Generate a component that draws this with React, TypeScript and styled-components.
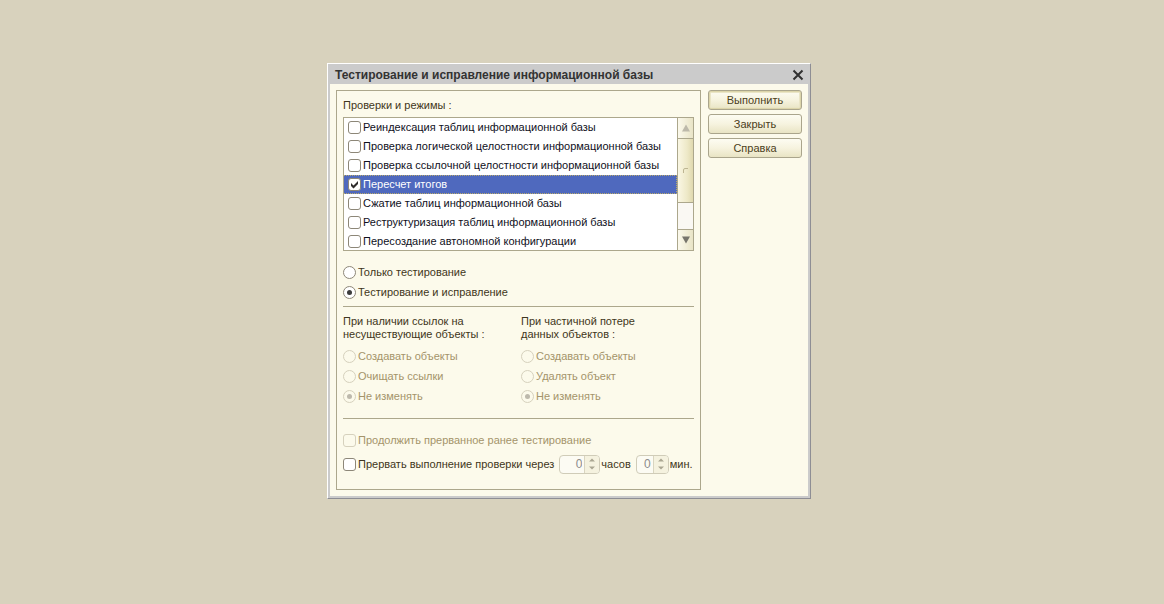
import React, { useState } from 'react';
import styled, { createGlobalStyle, css } from 'styled-components';

const colors = {
  desktop: '#d8d2bd',
  surface: '#fcfaeb',
  frame: '#cbcbcb',
  frameDark: '#8e8e94',
  line: '#aca78c',
  text: '#3f3620',
  muted: '#a4946a',
  accent: '#4f69be',
};

const GlobalStyle = createGlobalStyle`
  *, *::before, *::after {
    box-sizing: border-box;
  }

  body {
    margin: 0;
    background: ${colors.desktop};
    color: ${colors.text};
    font-family: 'Liberation Sans', Arial, sans-serif;
    font-size: 11px;
    line-height: 13px;
  }

  button, input {
    font: inherit;
    color: inherit;
  }
`;

const Desktop = styled.main`
  position: relative;
  min-height: 100vh;
`;

const Dialog = styled.section`
  position: absolute;
  top: 63px;
  left: 327px;
  width: 484px;
  border: 1px solid ${colors.frameDark};
  border-top-color: #fff;
  border-left-color: #fff;
  background: ${colors.frame};
  padding: 0 2px 2px 2px;
`;

const TitleBar = styled.header`
  display: flex;
  align-items: center;
  justify-content: space-between;
  height: 20px;
  padding: 1px 4px 0 5px;
`;

const Title = styled.h1`
  margin: 0;
  font-size: 12px;
  font-weight: 700;
  line-height: 20px;
  color: #333;
  white-space: nowrap;
`;

const CloseButton = styled.button`
  display: flex;
  padding: 0;
  border: 0;
  background: none;
  color: #303030;
`;

const Body = styled.div`
  display: flex;
  align-items: stretch;
  gap: 7px;
  padding: 6px;
  background: ${colors.surface};
`;

const Panel = styled.form`
  flex: 1;
  min-width: 0;
  border: 1px solid ${colors.line};
  padding: 8px 6px 15px;
`;

const Caption = styled.h2`
  margin: 0 0 5px;
  font-size: 11px;
  font-weight: 400;
  line-height: 13px;
`;

const ListBox = styled.div`
  display: flex;
  height: 134px;
  border: 1px solid ${colors.line};
  background: #fff;
`;

const Items = styled.ul`
  flex: 1;
  margin: 0;
  padding: 0;
  overflow: hidden;
  list-style: none;
`;

const Item = styled.li<{ $selected: boolean }>`
  padding-left: 4px;
  border: 1px dotted transparent;
  border-width: 1px 1px 1px 0;
  color: #10101c;

  ${({ $selected }) => $selected && css`
    border-color: #b9a96a;
    background: ${colors.accent};
    color: #fff;
  `}
`;

const ScrollBar = styled.div`
  display: flex;
  flex-direction: column;
  width: 16px;
  border-left: 1px solid ${colors.line};
  background: #faf8f3;
`;

const ScrollButton = styled.button`
  display: flex;
  align-items: center;
  justify-content: center;
  height: 20px;
  padding: 0;
  border: 0;
  background: linear-gradient(to right, #fbf9ec, #e9e4c6);
`;

const ScrollThumb = styled.div`
  display: flex;
  align-items: center;
  justify-content: center;
  height: 65px;
  border: 1px solid ${colors.line};
  border-width: 1px 0;
  background: linear-gradient(to right, #faf7e4, #eee9c8 60%, #e0d9ae);
`;

const ScrollTrack = styled.div`
  flex: 1;
  border-bottom: 1px solid ${colors.line};
`;

const Option = styled.label<{ $height: number; $disabled?: boolean }>`
  display: flex;
  align-items: center;
  gap: 2px;
  height: ${({ $height }) => $height}px;
  color: ${({ $disabled }) => ($disabled ? colors.muted : 'inherit')};
  white-space: nowrap;
`;

const Mark = styled.input`
  appearance: none;
  display: grid;
  place-content: center;
  flex: none;
  width: 13px;
  height: 13px;
  margin: 0;
  border: 1px solid #8d8778;
  background: #fff;

  &:disabled {
    border-color: #d6d1bd;
    background: ${colors.surface};
  }
`;

const CheckMark = styled(Mark).attrs({ type: 'checkbox' })`
  border-radius: 3px;
`;

const RadioMark = styled(Mark).attrs({ type: 'radio' })`
  border-radius: 50%;

  &:checked::before {
    content: '';
    width: 5px;
    height: 5px;
    border-radius: 50%;
    background: #3c3c3c;
  }

  &:checked:disabled::before {
    background: #bdb9ac;
  }
`;

const CheckHolder = styled.span`
  position: relative;
  display: flex;

  svg {
    position: absolute;
    inset: 0;
    pointer-events: none;
  }
`;

const Modes = styled.div`
  padding: 11px 0 4px;
`;

const Divider = styled.hr`
  height: 1px;
  margin: 0;
  border: 0;
  background: ${colors.line};
`;

const Columns = styled.div`
  display: grid;
  grid-template-columns: 178px 1fr;
  padding: 8px 0 12px;
`;

const Group = styled.fieldset`
  min-width: 0;
  margin: 0;
  padding: 0;
  border: 0;
`;

const Legend = styled.legend`
  margin-bottom: 5px;
  padding: 0;
  white-space: pre-line;
`;

const Footer = styled.div`
  display: grid;
  gap: 4px;
  padding-top: 11px;
`;

const TimeRow = styled.div`
  display: flex;
  align-items: center;
  gap: 5px;
`;

const Field = styled.label`
  display: flex;
  align-items: center;
  gap: 1px;
  white-space: nowrap;
`;

const Stepper = styled.span<{ $width: number }>`
  display: flex;
  width: ${({ $width }) => $width}px;
  height: 19px;
  border: 1px solid #d0ccb8;
  border-radius: 4px;
  background: #fcfbf3;
  overflow: hidden;
`;

const StepperInput = styled.input`
  flex: 1;
  min-width: 0;
  padding: 0 2px 0 0;
  border: 0;
  background: none;
  color: #8c8c8c;
  font-size: 12px;
  text-align: right;
`;

const StepperArrows = styled.span`
  display: flex;
  align-items: center;
  justify-content: center;
  width: 15px;
  border-left: 1px solid #d9d5c0;
  background: #f5f2df;
`;

const Actions = styled.div`
  display: flex;
  flex-direction: column;
  gap: 4px;
  width: 94px;
`;

const ActionButton = styled.button<{ $primary?: boolean }>`
  height: 20px;
  padding: 0;
  border: 1px solid #aaa58c;
  border-radius: 3px;
  background: linear-gradient(#fdfcf2, #f6f3df 50%, #e9e4c4);
  color: #4b4020;
  line-height: 18px;

  ${({ $primary }) => $primary && css`
    box-shadow: inset 0 0 0 1px #dcd5aa, inset 0 0 0 2px #eae5c6;
  `}
`;

const checks = [
  'Реиндексация таблиц информационной базы',
  'Проверка логической целостности информационной базы',
  'Проверка ссылочной целостности информационной базы',
  'Пересчет итогов',
  'Сжатие таблиц информационной базы',
  'Реструктуризация таблиц информационной базы',
  'Пересоздание автономной конфигурации',
];

const modes = ['Только тестирование', 'Тестирование и исправление'];

const groups = [
  {
    name: 'missing',
    title: 'При наличии ссылок на\nнесуществующие объекты :',
    options: ['Создавать объекты', 'Очищать ссылки', 'Не изменять'],
  },
  {
    name: 'partial',
    title: 'При частичной потере\nданных объектов :',
    options: ['Создавать объекты', 'Удалять объект', 'Не изменять'],
  },
];

type CheckboxProps = React.InputHTMLAttributes<HTMLInputElement>;

const Checkbox: React.FC<CheckboxProps> = (props) => (
  <CheckHolder>
    <CheckMark {...props} />
    {props.checked && (
      <svg width="13" height="13" viewBox="0 0 13 13">
        <path d="M3 5 L5.5 7.5 L10 3 V6 L5.5 10.5 L3 8 Z" fill="#2e2c2c" />
      </svg>
    )}
  </CheckHolder>
);

const Arrow: React.FC<{ down?: boolean; color: string }> = ({ down, color }) => (
  <svg width="8" height="8" viewBox="0 0 8 8">
    <path d={down ? 'M0 0.5 H8 L4 7.5 Z' : 'M0 7.5 H8 L4 0.5 Z'} fill={color} />
  </svg>
);

const NumberField: React.FC<{ label: string; width: number }> = ({ label, width }) => (
  <Field>
    <Stepper $width={width}>
      <StepperInput type="text" inputMode="numeric" defaultValue="0" disabled />
      <StepperArrows>
        <svg width="6" height="12" viewBox="0 0 6 12">
          <path d="M0 3.5 L3 0.5 L6 3.5 Z M0 8.5 L3 11.5 L6 8.5 Z" fill="#aaa692" />
        </svg>
      </StepperArrows>
    </Stepper>
    {label}
  </Field>
);

const App: React.FC = () => {
  const [enabled, setEnabled] = useState<number[]>([3]);
  const [selected, setSelected] = useState(3);
  const [mode, setMode] = useState(1);
  const [interrupt, setInterrupt] = useState(false);

  const toggle = (index: number) => {
    setSelected(index);
    setEnabled((prev) =>
      prev.includes(index) ? prev.filter((i) => i !== index) : [...prev, index]
    );
  };

  return (
    <Desktop>
      <GlobalStyle />
      <Dialog role="dialog" aria-labelledby="dialog-title">
        <TitleBar>
          <Title id="dialog-title">Тестирование и исправление информационной базы</Title>
          <CloseButton type="button" aria-label="Закрыть окно">
            <svg width="12" height="12" viewBox="0 0 12 12">
              <path d="M1.5 1.5 L10.5 10.5 M10.5 1.5 L1.5 10.5" stroke="currentColor" strokeWidth="2" />
            </svg>
          </CloseButton>
        </TitleBar>

        <Body>
          <Panel>
            <Caption>Проверки и режимы :</Caption>
            <ListBox>
              <Items>
                {checks.map((text, index) => (
                  <Item key={text} $selected={index === selected}>
                    <Option $height={17}>
                      <Checkbox checked={enabled.includes(index)} onChange={() => toggle(index)} />
                      {text}
                    </Option>
                  </Item>
                ))}
              </Items>
              <ScrollBar>
                <ScrollButton type="button" aria-label="Вверх">
                  <Arrow color="#bdb9aa" />
                </ScrollButton>
                <ScrollThumb>
                  <svg width="5" height="5" viewBox="0 0 5 5">
                    <path d="M0.5 5 V2 Q0.5 0.5 2 0.5 H5" fill="none" stroke="#bdb592" />
                  </svg>
                </ScrollThumb>
                <ScrollTrack />
                <ScrollButton type="button" aria-label="Вниз">
                  <Arrow down color="#77756c" />
                </ScrollButton>
              </ScrollBar>
            </ListBox>

            <Modes>
              {modes.map((text, index) => (
                <Option key={text} $height={20}>
                  <RadioMark name="mode" checked={mode === index} onChange={() => setMode(index)} />
                  {text}
                </Option>
              ))}
            </Modes>
            <Divider />

            <Columns>
              {groups.map(({ name, title, options }) => (
                <Group key={name}>
                  <Legend>{title}</Legend>
                  {options.map((text, index) => (
                    <Option key={text} $height={20} $disabled>
                      <RadioMark name={name} defaultChecked={index === 2} disabled />
                      {text}
                    </Option>
                  ))}
                </Group>
              ))}
            </Columns>
            <Divider />

            <Footer>
              <Option $height={20} $disabled>
                <Checkbox disabled />
                Продолжить прерванное ранее тестирование
              </Option>
              <TimeRow>
                <Option $height={20}>
                  <Checkbox checked={interrupt} onChange={() => setInterrupt(!interrupt)} />
                  Прервать выполнение проверки через
                </Option>
                <NumberField label="часов" width={41} />
                <NumberField label="мин." width={33} />
              </TimeRow>
            </Footer>
          </Panel>

          <Actions>
            <ActionButton type="button" $primary>Выполнить</ActionButton>
            <ActionButton type="button">Закрыть</ActionButton>
            <ActionButton type="button">Справка</ActionButton>
          </Actions>
        </Body>
      </Dialog>
    </Desktop>
  );
};

export default App;
